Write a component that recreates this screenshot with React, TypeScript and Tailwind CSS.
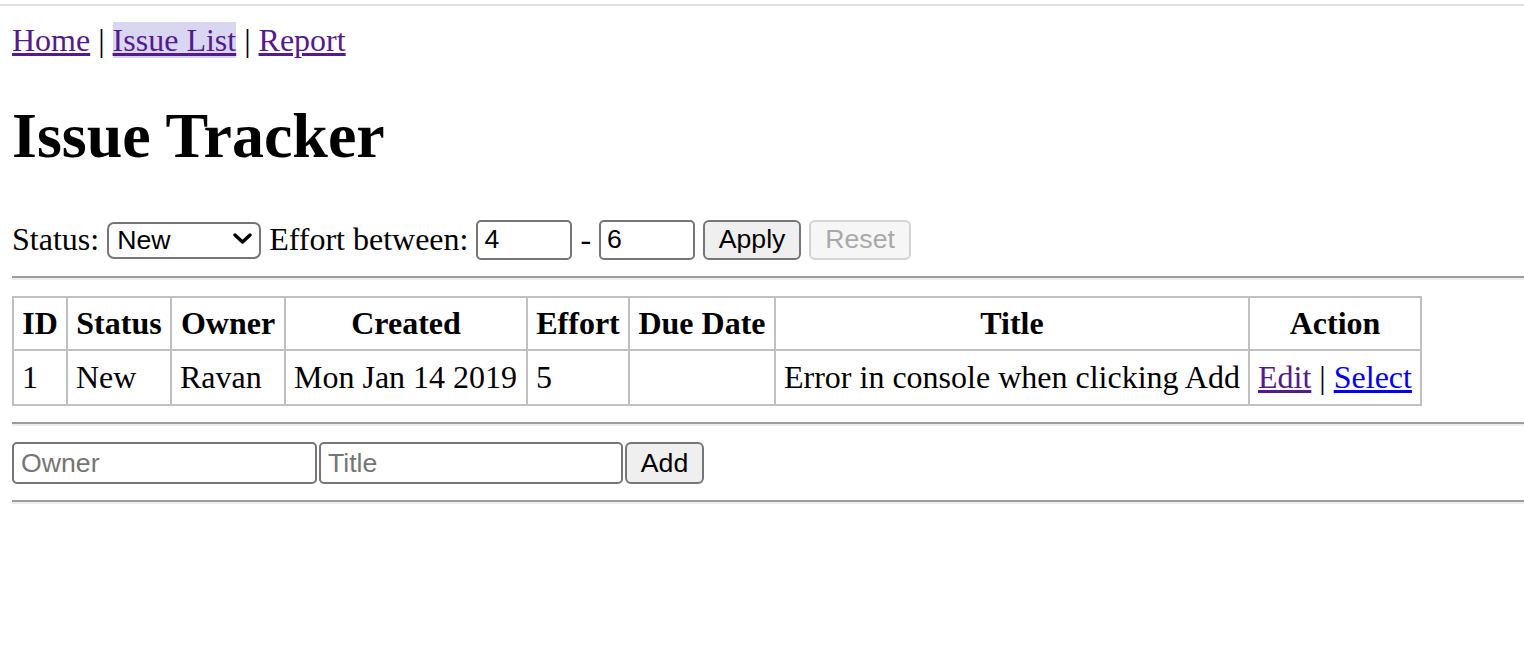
import React from 'react';

const Separator: React.FC = () => <div className="mt-4 mb-4 h-0 border-t-2 border-b-2 border-t-[#9c9c9c] border-b-[#ededed]" />;

const App: React.FC = () => {
  const headers: { label: string; width: string }[] = [
    { label: 'ID', width: 'w-[54px]' },
    { label: 'Status', width: 'w-[104px]' },
    { label: 'Owner', width: 'w-[114px]' },
    { label: 'Created', width: 'w-[242px]' },
    { label: 'Effort', width: 'w-[102px]' },
    { label: 'Due Date', width: 'w-[146px]' },
    { label: 'Title', width: 'w-[474px]' },
    { label: 'Action', width: 'w-[172px]' },
  ];

  return (
    <div className="min-h-screen bg-white text-black font-['Liberation_Serif','Times_New_Roman',serif] text-[32px] leading-[normal]">
      {/* browser chrome edge */}
      <div className="h-[6px] border-b-2 border-[#dedede]" />

      <div className="pl-3 pt-4">
        {/* Nav */}
        <div>
          <a href="#" className="underline text-[#551a8b]">Home</a>
          {' | '}
          <a href="#" className="underline text-[#551a8b] bg-[#d8d6f1]">Issue List</a>
          {' | '}
          <a href="#" className="underline text-[#551a8b]">Report</a>
        </div>

        <h1 className="mt-[40px] mb-[46px] text-[64px] font-bold leading-[normal]">Issue Tracker</h1>

        {/* Filter */}
        <div className="flex items-center gap-2 h-[41px]">
          <span>Status:</span>
          <div className="relative">
            <select
              defaultValue="New"
              className="appearance-none w-[154px] h-[37px] pl-[8px] border-2 border-[#767676] rounded-[7px] bg-white font-['Liberation_Sans',Arial,sans-serif] text-[26.67px] text-black outline-none"
            >
              <option>(All)</option>
              <option>New</option>
              <option>Open</option>
              <option>Assigned</option>
              <option>Fixed</option>
              <option>Verified</option>
              <option>Closed</option>
            </select>
            <svg className="pointer-events-none absolute right-[9px] top-[13px]" width="19" height="11" viewBox="0 0 19 11">
              <path d="M2 2 L9.5 9 L17 2" fill="none" stroke="#000" strokeWidth="3.4" strokeLinecap="round" strokeLinejoin="round" />
            </svg>
          </div>
          <span>Effort between:</span>
          <input
            defaultValue="4"
            className="w-[96px] h-[40px] pl-[6px] border-2 border-[#767676] rounded-[5px] font-['Liberation_Sans',Arial,sans-serif] text-[26.67px] text-black outline-none"
          />
          <span>-</span>
          <input
            defaultValue="6"
            className="w-[96px] h-[40px] pl-[6px] border-2 border-[#767676] rounded-[5px] font-['Liberation_Sans',Arial,sans-serif] text-[26.67px] text-black outline-none"
          />
          <button className="w-[98px] h-[40px] flex items-center justify-center border-2 border-[#767676] rounded-[6px] bg-[#efefef] font-['Liberation_Sans',Arial,sans-serif] text-[26.67px] text-black">
            Apply
          </button>
          <button disabled className="w-[102px] h-[40px] flex items-center justify-center border-2 border-[#d4d4d4] rounded-[6px] bg-[#f6f6f6] font-['Liberation_Sans',Arial,sans-serif] text-[26.67px] text-[#a9a9a9]">
            Reset
          </button>
        </div>

        <Separator />

        {/* Issue table */}
        <table className="border-collapse border-2 border-[#c0c0c0]">
          <thead>
            <tr>
              {headers.map((h) => (
                <th key={h.label} className={`${h.width} border-2 border-[#c0c0c0] px-2 py-[7px] font-bold text-center`}>{h.label}</th>
              ))}
            </tr>
          </thead>
          <tbody>
            <tr>
              <td className="border-2 border-[#c0c0c0] p-2">1</td>
              <td className="border-2 border-[#c0c0c0] p-2">New</td>
              <td className="border-2 border-[#c0c0c0] p-2">Ravan</td>
              <td className="border-2 border-[#c0c0c0] p-2">Mon Jan 14 2019</td>
              <td className="border-2 border-[#c0c0c0] p-2">5</td>
              <td className="border-2 border-[#c0c0c0] p-2"></td>
              <td className="border-2 border-[#c0c0c0] p-2">Error in console when clicking Add</td>
              <td className="border-2 border-[#c0c0c0] p-2">
                <a href="#" className="underline text-[#551a8b]">Edit</a>
                {' | '}
                <a href="#" className="underline text-[#0000ee]">Select</a>
              </td>
            </tr>
          </tbody>
        </table>

        <Separator />

        {/* Add form */}
        <form className="flex gap-[2px]" onSubmit={(e) => e.preventDefault()}>
          <input
            placeholder="Owner"
            className="w-[305px] h-[42px] pl-[7px] border-2 border-[#767676] rounded-[5px] font-['Liberation_Sans',Arial,sans-serif] text-[26.67px] text-black placeholder:text-[#757575] outline-none"
          />
          <input
            placeholder="Title"
            className="w-[304px] h-[42px] pl-[7px] border-2 border-[#767676] rounded-[5px] font-['Liberation_Sans',Arial,sans-serif] text-[26.67px] text-black placeholder:text-[#757575] outline-none"
          />
          <button className="w-[79px] h-[42px] flex items-center justify-center border-2 border-[#767676] rounded-[6px] bg-[#efefef] font-['Liberation_Sans',Arial,sans-serif] text-[26.67px] text-black">
            Add
          </button>
        </form>

        <Separator />
      </div>
    </div>
  );
};

export default App;
